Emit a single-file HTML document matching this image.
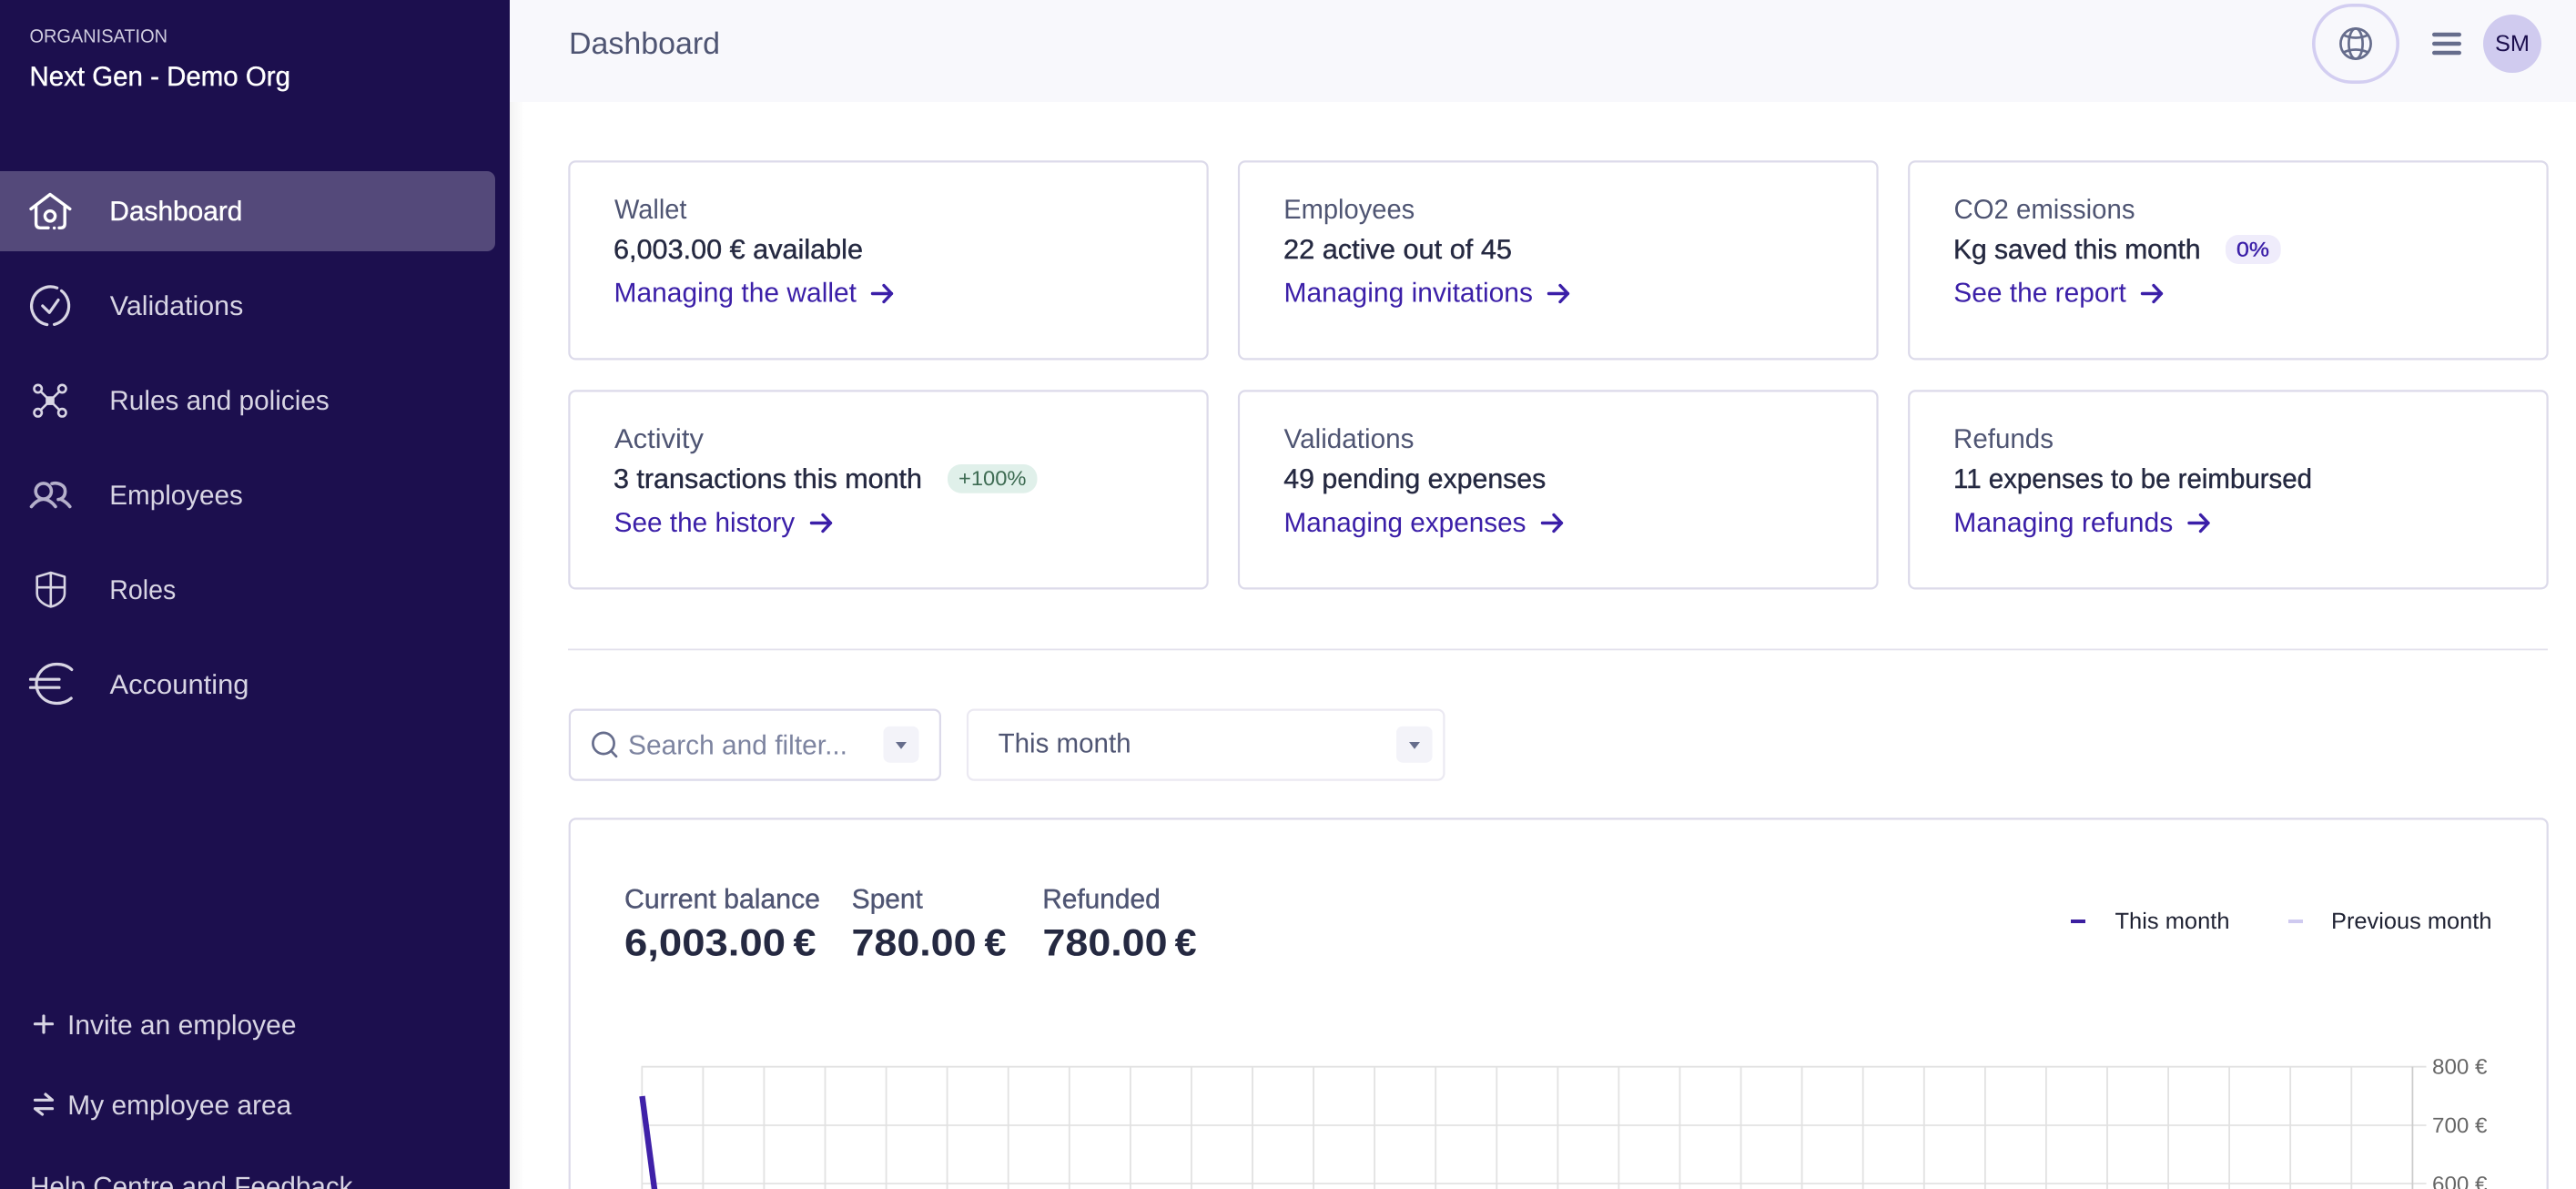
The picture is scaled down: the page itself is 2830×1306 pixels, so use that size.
<!DOCTYPE html>
<html lang="en"><head><meta charset="utf-8"><title>Dashboard</title>
<style>
html,body{margin:0;padding:0;background:#fff;width:2830px;height:1306px;overflow:hidden}
svg{display:block}
text{font-family:"Liberation Sans",sans-serif;font-size:30px;text-rendering:geometricPrecision}
.m{stroke-width:.4px}
.ct{fill:#4f5573}
.cv{fill:#252941;stroke:#252941}
.cl{fill:#3b1fa8}
.nav{fill:#d8d5e4}
.ax{fill:#666;font-size:23.5px}
.lg{fill:#1f2233;font-size:25px}
.big{font-size:41.5px;font-weight:700;fill:#252941}
.card{fill:#fff;stroke:#dcdaea;stroke-width:2.2}
.ar{fill:none;stroke:#3b1fa8;stroke-width:3.4;stroke-linecap:round;stroke-linejoin:round}
.ic{fill:none;stroke:#d8d5e4;stroke-width:3.2;stroke-linecap:round;stroke-linejoin:round}
</style></head><body>
<svg xmlns="http://www.w3.org/2000/svg" width="2830" height="1306" viewBox="0 0 2830 1306">
<defs>
<linearGradient id="sh" x1="0" x2="1" y1="0" y2="0"><stop offset="0" stop-color="#000" stop-opacity=".05"/><stop offset="1" stop-color="#000" stop-opacity="0"/></linearGradient>
</defs>
<rect width="2830" height="1306" fill="#fff"/>
<rect x="560" y="0" width="2270" height="112" fill="#f8f8fc"/>
<rect x="560" y="112" width="16" height="1194" fill="url(#sh)"/>
<rect x="0" y="0" width="560" height="1306" fill="#1c0f4e"/>
<rect x="-10" y="188" width="554" height="88" rx="9" fill="#54497a"/>

<text x="32.5" y="46.7" style="font-size:20.6px" fill="#d0cde0" textLength="151.5" lengthAdjust="spacingAndGlyphs">ORGANISATION</text>
<text x="32.5" y="94" fill="#fff" class="m" stroke="#fff" textLength="286.5" lengthAdjust="spacingAndGlyphs">Next Gen - Demo Org</text>

<text x="120.4" y="242" fill="#fff" class="m" stroke="#fff" textLength="146" lengthAdjust="spacingAndGlyphs">Dashboard</text>
<text x="120.8" y="346" class="nav" textLength="146.5" lengthAdjust="spacingAndGlyphs">Validations</text>
<text x="120.3" y="450" class="nav" textLength="241.5" lengthAdjust="spacingAndGlyphs">Rules and policies</text>
<text x="120.3" y="554" class="nav" textLength="146.5" lengthAdjust="spacingAndGlyphs">Employees</text>
<text x="120.3" y="658" class="nav" textLength="73" lengthAdjust="spacingAndGlyphs">Roles</text>
<text x="120.5" y="762" class="nav" textLength="153" lengthAdjust="spacingAndGlyphs">Accounting</text>
<text x="74" y="1136" class="nav" textLength="251.5" lengthAdjust="spacingAndGlyphs">Invite an employee</text>
<text x="74.3" y="1224" class="nav" textLength="246" lengthAdjust="spacingAndGlyphs">My employee area</text>
<text x="33" y="1313.6" class="nav" textLength="354.5" lengthAdjust="spacingAndGlyphs">Help Centre and Feedback</text>

<!-- home -->
<g fill="none" stroke="#fff" stroke-width="3.4" stroke-linecap="round" stroke-linejoin="round">
<path d="M34 229.5 55 213.5 76.8 229.5"/>
<path d="M39.6 226V245.5Q39.6 250.3 44.5 250.3H53"/>
<path d="M71.2 226V245.5Q71.2 250.3 66.5 250.3H65"/>
<circle cx="55" cy="237.3" r="5.6"/>
<path d="M59.6 250.4h.1"/>
</g>
<!-- check circle -->
<g class="ic">
<path d="M62.7 316.2A21 21 0 1 0 51.7 356.6"/>
<path d="M67.5 319.4A21 21 0 0 1 59.6 356.4"/>
<path d="M46.8 336 54.3 343.3 64 329.5"/>
</g>
<!-- rules -->
<g fill="none" stroke="#d8d5e4" stroke-width="2.6">
<circle cx="41.7" cy="427" r="4.2"/><circle cx="68.3" cy="427" r="4.2"/>
<circle cx="41.7" cy="453.3" r="4.2"/><circle cx="68.3" cy="453.3" r="4.2"/>
<path d="M44.7 430 65.3 450.3M65.3 430 44.7 450.3"/>
</g>
<rect x="50.2" y="435.3" width="9.6" height="9.6" fill="#d8d5e4"/>
<!-- employees -->
<g fill="none" stroke="#b5b0cb" stroke-width="3.6" stroke-linecap="round" stroke-linejoin="round">
<circle cx="47.8" cy="539.5" r="8.6"/>
<path d="M34.5 556.5Q41 548.3 47.8 548.3T61 556.5"/>
<path d="M57 531.2C64 529.5 71.6 533 71.6 539.5 71.6 544 69.5 547 66 548.3L64 548.6"/>
<path d="M67 548.5Q73 551.5 76.8 556.5"/>
</g>
<!-- shield -->
<g fill="none" stroke="#d8d5e4" stroke-width="2.6" stroke-linejoin="round">
<path d="M55.8 629 71 633.5V652C71 660 62 665 55.8 666.4 49.6 665 40.7 660 40.7 652V633.5Z"/>
<path d="M55.8 629V666M40.7 645.2H71"/>
</g>
<!-- euro -->
<g class="ic">
<path d="M78.8 735.5C74 731 68 729.5 62.5 729.5 49.5 729.5 40 739 40 751S49.5 772.5 62.5 772.5C68 772.5 73.5 771 78.2 767"/>
<path d="M33.5 746.2H65M33.5 755.2H65"/>
</g>
<!-- plus / swap -->
<path d="M48 1116V1134M38.5 1124.7H57.5" class="ic" stroke-width="3"/>
<path d="M38.5 1208.3H57.5L50 1202M57.5 1217.7H38.5L46.5 1224" class="ic" stroke-width="3"/>

<!-- header -->
<text x="625" y="59" style="font-size:33.7px" class="ct" textLength="166" lengthAdjust="spacingAndGlyphs">Dashboard</text>
<rect x="2541.8" y="5.8" width="92.4" height="84.4" rx="42.2" fill="none" stroke="#d3cef1" stroke-width="3.6"/>
<g fill="none" stroke="#666d8c" stroke-width="2.7">
<circle cx="2588" cy="48" r="16.6"/>
<ellipse cx="2588" cy="48" rx="7.6" ry="16.6"/>
<path d="M2574.5 38.5Q2588 44.5 2601.5 38.5M2574.5 57.5Q2588 51.5 2601.5 57.5"/>
</g>
<path d="M2674.3 38H2701.7M2674.3 48H2701.7M2674.3 58H2701.7" fill="none" stroke="#666d8c" stroke-width="4.6" stroke-linecap="round"/>
<circle cx="2760" cy="48" r="32" fill="#d0cbef"/>
<text x="2741" y="56" style="font-size:25px" fill="#1c0f4e" textLength="38" lengthAdjust="spacingAndGlyphs">SM</text>

<!-- cards -->
<rect class="card" x="625.4" y="177.4" width="701.2" height="217" rx="7"/>
<rect class="card" x="1361" y="177.4" width="701.5" height="217" rx="7"/>
<rect class="card" x="2097.2" y="177.4" width="701.4" height="217" rx="7"/>
<rect class="card" x="625.4" y="429.4" width="701.2" height="217" rx="7"/>
<rect class="card" x="1361" y="429.4" width="701.5" height="217" rx="7"/>
<rect class="card" x="2097.2" y="429.4" width="701.4" height="217" rx="7"/>

<text x="675" y="240" class="ct" textLength="79.5" lengthAdjust="spacingAndGlyphs">Wallet</text>
<text x="674" y="284" class="cv m" textLength="274" lengthAdjust="spacingAndGlyphs">6,003.00 € available</text>
<text x="674.5" y="331.7" class="cl" textLength="266.5" lengthAdjust="spacingAndGlyphs">Managing the wallet</text>
<path class="ar" transform="translate(958.5 322.5)" d="M0 0H21M12.5-9 21 0 12.5 9"/>

<text x="1410.2" y="240" class="ct" textLength="144" lengthAdjust="spacingAndGlyphs">Employees</text>
<text x="1410" y="284" class="cv m" textLength="251" lengthAdjust="spacingAndGlyphs">22 active out of 45</text>
<text x="1410.5" y="331.7" class="cl" textLength="273.5" lengthAdjust="spacingAndGlyphs">Managing invitations</text>
<path class="ar" transform="translate(1701.5 322.5)" d="M0 0H21M12.5-9 21 0 12.5 9"/>

<text x="2146.5" y="240" class="ct" textLength="199" lengthAdjust="spacingAndGlyphs">CO2 emissions</text>
<text x="2146" y="284" class="cv m" textLength="271.5" lengthAdjust="spacingAndGlyphs">Kg saved this month</text>
<rect x="2445" y="258" width="60.7" height="32" rx="14" fill="#efecfb"/>
<text x="2457" y="281.7" style="font-size:22.5px" fill="#3b1fa8" stroke="#3b1fa8" class="m" textLength="36" lengthAdjust="spacingAndGlyphs">0%</text>
<text x="2146.3" y="331.7" class="cl" textLength="189.5" lengthAdjust="spacingAndGlyphs">See the report</text>
<path class="ar" transform="translate(2353.5 322.5)" d="M0 0H21M12.5-9 21 0 12.5 9"/>

<text x="675" y="492" class="ct" textLength="98" lengthAdjust="spacingAndGlyphs">Activity</text>
<text x="674" y="536" class="cv m" textLength="339" lengthAdjust="spacingAndGlyphs">3 transactions this month</text>
<rect x="1041" y="510" width="98.5" height="31.7" rx="15" fill="#e0f0ea"/>
<text x="1053" y="533" style="font-size:22.5px" fill="#3d6b52" textLength="74.5" lengthAdjust="spacingAndGlyphs">+100%</text>
<text x="674.6" y="584" class="cl" textLength="198.5" lengthAdjust="spacingAndGlyphs">See the history</text>
<path class="ar" transform="translate(891.5 574.5)" d="M0 0H21M12.5-9 21 0 12.5 9"/>

<text x="1410.5" y="492" class="ct" textLength="143" lengthAdjust="spacingAndGlyphs">Validations</text>
<text x="1410.3" y="536" class="cv m" textLength="288" lengthAdjust="spacingAndGlyphs">49 pending expenses</text>
<text x="1410.5" y="584" class="cl" textLength="266" lengthAdjust="spacingAndGlyphs">Managing expenses</text>
<path class="ar" transform="translate(1694.5 574.5)" d="M0 0H21M12.5-9 21 0 12.5 9"/>

<text x="2146" y="492" class="ct" textLength="110" lengthAdjust="spacingAndGlyphs">Refunds</text>
<text x="2146" y="536" class="cv m" textLength="394" lengthAdjust="spacingAndGlyphs">11 expenses to be reimbursed</text>
<text x="2146.3" y="584" class="cl" textLength="241" lengthAdjust="spacingAndGlyphs">Managing refunds</text>
<path class="ar" transform="translate(2405 574.5)" d="M0 0H21M12.5-9 21 0 12.5 9"/>

<rect x="624" y="712.5" width="2175" height="1.8" fill="#e3e1ec"/>

<!-- search -->
<rect class="card" x="625.9" y="779.6" width="407" height="77" rx="7"/>
<g fill="none" stroke="#666d8c" stroke-width="2.7" stroke-linecap="round"><circle cx="663" cy="816.5" r="11.6"/><path d="M671.5 825 677 830.8"/></g>
<text x="690" y="828.3" fill="#7d84a0" textLength="241" lengthAdjust="spacingAndGlyphs">Search and filter...</text>
<rect x="970.5" y="797.7" width="39" height="40" rx="7" fill="#f3f3f9"/>
<path d="M984 815H996L990 822.7Z" fill="#666d8c"/>
<!-- select -->
<rect x="1063" y="779.6" width="523.4" height="77" rx="7" fill="#fff" stroke="#ebe9f2" stroke-width="2.2"/>
<text x="1096.6" y="826.7" fill="#4f5573" textLength="146" lengthAdjust="spacingAndGlyphs">This month</text>
<rect x="1534" y="797.7" width="39.5" height="40" rx="7" fill="#f3f3f9"/>
<path d="M1548 815H1560L1554 822.7Z" fill="#666d8c"/>

<!-- chart card -->
<rect class="card" x="625.7" y="899.4" width="2173" height="460" rx="7"/>
<text x="686" y="997.3" class="ct m" stroke="#4f5573" textLength="215" lengthAdjust="spacingAndGlyphs">Current balance</text>
<text x="935.8" y="997.3" class="ct m" stroke="#4f5573" textLength="78" lengthAdjust="spacingAndGlyphs">Spent</text>
<text x="1145.2" y="997.3" class="ct m" stroke="#4f5573" textLength="129.5" lengthAdjust="spacingAndGlyphs">Refunded</text>
<text x="686" y="1049.3" class="big" textLength="177" lengthAdjust="spacingAndGlyphs">6,003.00</text><text x="871.5" y="1049.3" class="big" textLength="25" lengthAdjust="spacingAndGlyphs">€</text>
<text x="935.5" y="1049.3" class="big" textLength="137" lengthAdjust="spacingAndGlyphs">780.00</text><text x="1081.5" y="1049.3" class="big" textLength="24" lengthAdjust="spacingAndGlyphs">€</text>
<text x="1145.5" y="1049.3" class="big" textLength="137" lengthAdjust="spacingAndGlyphs">780.00</text><text x="1290.7" y="1049.3" class="big" textLength="24" lengthAdjust="spacingAndGlyphs">€</text>

<rect x="2275" y="1010" width="16" height="4" fill="#3b1fa0"/>
<text x="2323.5" y="1020" class="lg" textLength="126" lengthAdjust="spacingAndGlyphs">This month</text>
<rect x="2514" y="1010" width="16" height="4" fill="#cfcaf0"/>
<text x="2561" y="1020" class="lg" textLength="176.5" lengthAdjust="spacingAndGlyphs">Previous month</text>

<!-- grid -->
<path fill="none" stroke="#e2e2e2" stroke-width="1.8" d="M705.3 1171.7V1306M772.4 1171.7V1306M839.4 1171.7V1306M906.5 1171.7V1306M973.6 1171.7V1306M1040.6 1171.7V1306M1107.7 1171.7V1306M1174.8 1171.7V1306M1241.9 1171.7V1306M1308.9 1171.7V1306M1376 1171.7V1306M1443.1 1171.7V1306M1510.1 1171.7V1306M1577.2 1171.7V1306M1644.3 1171.7V1306M1711.4 1171.7V1306M1778.4 1171.7V1306M1845.5 1171.7V1306M1912.6 1171.7V1306M1979.6 1171.7V1306M2046.7 1171.7V1306M2113.8 1171.7V1306M2180.9 1171.7V1306M2247.9 1171.7V1306M2315 1171.7V1306M2382.1 1171.7V1306M2449.1 1171.7V1306M2516.2 1171.7V1306M2583.3 1171.7V1306M704.5 1171.7H2665.5M704.5 1236H2665.5M704.5 1300H2665.5"/>
<path stroke="#ccc" stroke-width="1.8" d="M2650.4 1171.7V1306"/>
<path d="M705.5 1204 719.5 1310" fill="none" stroke="#3f21a8" stroke-width="6.4"/>
<text x="2672" y="1179.6" class="ax" textLength="60.5" lengthAdjust="spacingAndGlyphs">800 €</text>
<text x="2672" y="1244" class="ax" textLength="60.5" lengthAdjust="spacingAndGlyphs">700 €</text>
<text x="2672" y="1308.4" class="ax" textLength="60.5" lengthAdjust="spacingAndGlyphs">600 €</text>
</svg>
</body></html>
